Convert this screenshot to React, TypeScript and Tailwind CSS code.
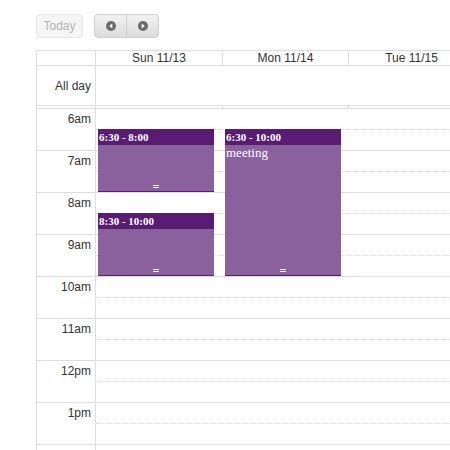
const hours = ["6am", "7am", "8am", "9am", "10am", "11am", "12pm", "1pm", ""];

function CircleArrow({ dir }: { dir: "w" | "e" }) {
  return (
    <svg width="10" height="10" viewBox="0 0 10 10">
      <circle cx="5" cy="5" r="5" fill="#6b6b6b" />
      {dir === "w" ? <polygon points="6.3,2.6 3.3,5 6.3,7.4" fill="#fff" /> : <polygon points="3.7,2.6 6.7,5 3.7,7.4" fill="#fff" />}
    </svg>
  );
}

interface CalEvent {
  time: string;
  title?: string;
  top: number;
  height: number;
}

function EventBox({ ev }: { ev: CalEvent }) {
  return (
    <div
      className="absolute left-[2px] w-[116px] bg-[#8a619c] border-b border-[#581c73] overflow-hidden"
      style={{ top: ev.top, height: ev.height }}
    >
      <div className="h-[16px] bg-[#581c73] pl-[1px] text-[11px] leading-[16px] font-bold text-white font-['Liberation_Serif',serif]">
        {ev.time}
      </div>
      {ev.title && (
        <div className="pl-[1px] text-[13px] leading-[16px] text-white font-['Liberation_Serif',serif]">{ev.title}</div>
      )}
      <div className="absolute bottom-[3px] left-1/2 -translate-x-1/2 w-[6px] h-[3px] border-y border-white/90" />
    </div>
  );
}

const sunday: CalEvent[] = [
  { time: "6:30 - 8:00", top: 20, height: 63 },
  { time: "8:30 - 10:00", top: 104, height: 63 },
];
const monday: CalEvent[] = [{ time: "6:30 - 10:00", title: "meeting", top: 20, height: 147 }];

export default function App() {
  return (
    <div className="w-[450px] h-[450px] overflow-hidden bg-white pl-[36px] pt-[14px] font-['Liberation_Sans',Arial,sans-serif] text-[12px] text-[#333]">
      <div className="flex gap-[11px] h-[24px]">
        <div className="w-[47px] h-[24px] rounded-[4px] border border-[#e6e6e6] bg-[#f5f5f5] text-[#b3b3b3] flex items-center justify-center">
          Today
        </div>
        <div className="flex h-[24px] rounded-[4px] border border-[#cfcfcf] bg-gradient-to-b from-[#f2f2f2] to-[#dcdcdc] overflow-hidden">
          <div className="w-[32px] flex items-center justify-center border-r border-[#cfcfcf]">
            <CircleArrow dir="w" />
          </div>
          <div className="w-[31px] flex items-center justify-center">
            <CircleArrow dir="e" />
          </div>
        </div>
      </div>

      <div className="mt-[12px] w-[600px] border-l border-t border-[#ddd]">
        <div className="grid grid-cols-[59px_127px_126px_126px_126px]">
          <div className="h-[15px] border-r border-b border-[#ddd]" />
          {["Sun 11/13", "Mon 11/14", "Tue 11/15", "Wed 11/16"].map((d) => (
            <div key={d} className="h-[15px] border-r border-b border-[#ddd] text-center leading-[14px]">
              {d}
            </div>
          ))}
          <div className="h-[40px] border-r border-b border-[#ddd] flex items-center justify-end pr-[4px]">All day</div>
          <div className="col-span-4 h-[40px] border-b border-[#ddd]" />
          {[0, 1, 2, 3, 4].map((i) => (
            <div key={i} className="h-[3px] border-r border-b border-[#ddd]" />
          ))}
        </div>

        <div className="relative">
          {hours.map((h, i) => (
            <div key={i} className="flex h-[42px] border-b border-[#ddd]">
              <div className="w-[59px] shrink-0 border-r border-[#ddd] text-right pr-[4px] pt-[2px] leading-[16px]">{h}</div>
              <div className="flex-1">
                <div className="h-[21px] border-b border-dotted border-[#ddd]" />
              </div>
            </div>
          ))}
          <div className="absolute top-0 left-[59px] w-[127px] h-full">
            {sunday.map((ev) => (
              <EventBox key={ev.time} ev={ev} />
            ))}
          </div>
          <div className="absolute top-0 left-[186px] w-[126px] h-full">
            {monday.map((ev) => (
              <EventBox key={ev.time} ev={ev} />
            ))}
          </div>
        </div>
      </div>
    </div>
  );
}
